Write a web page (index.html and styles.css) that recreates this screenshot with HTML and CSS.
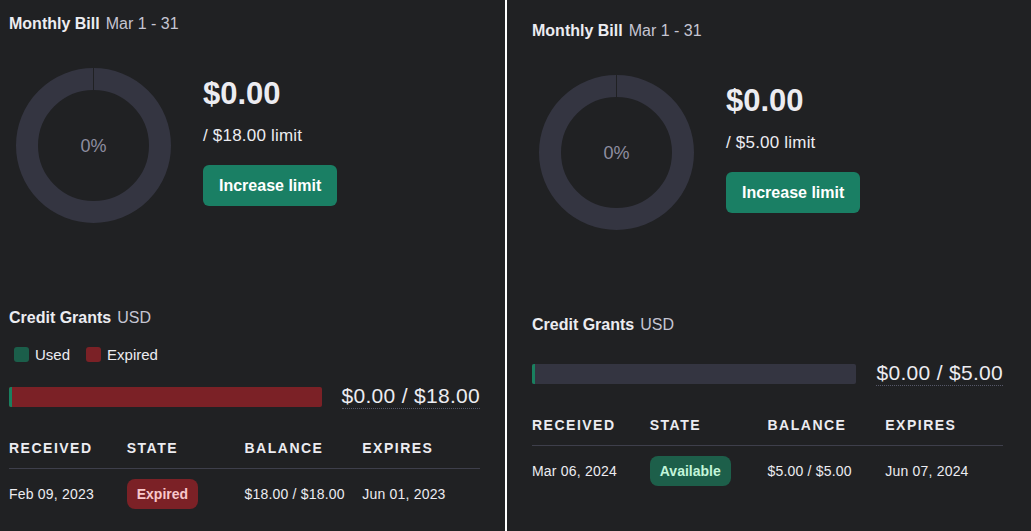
FILE: index.html
```html
<!DOCTYPE html>
<html lang="en">
<head>
<meta charset="utf-8">
<title>Billing</title>
<link rel="stylesheet" href="styles.css">
</head>
<body>
<div class="page">
  <section class="panel panel-left">
    <div class="heading"><span class="title">Monthly Bill</span><span class="sub">Mar 1 - 31</span></div>
    <div class="bill">
      <div class="donut">
        <svg width="155" height="155" viewBox="0 0 155 155">
          <circle cx="77.5" cy="77.5" r="66.5" fill="none" stroke="#343541" stroke-width="22"/>
          <line x1="77.5" y1="0" x2="77.5" y2="23" stroke="#202123" stroke-width="1"/>
        </svg>
        <span class="pct">0%</span>
      </div>
      <div class="amount">
        <div class="total">$0.00</div>
        <div class="limit">/ $18.00 limit</div>
        <button class="btn">Increase limit</button>
      </div>
    </div>
    <div class="heading grants-heading"><span class="title">Credit Grants</span><span class="sub">USD</span></div>
    <div class="legend">
      <span class="legend-item"><i class="sw sw-used"></i>Used</span>
      <span class="legend-item"><i class="sw sw-expired"></i>Expired</span>
    </div>
    <div class="bar-row">
      <div class="bar bar-expired"><span class="bar-used"></span></div>
      <span class="bar-label">$0.00 / $18.00</span>
    </div>
    <div class="table">
      <div class="th">Received</div><div class="th">State</div><div class="th">Balance</div><div class="th">Expires</div>
      <div class="td">Feb 09, 2023</div><div class="td"><span class="badge badge-expired">Expired</span></div><div class="td">$18.00 / $18.00</div><div class="td">Jun 01, 2023</div>
    </div>
  </section>
  <section class="panel panel-right">
    <div class="heading"><span class="title">Monthly Bill</span><span class="sub">Mar 1 - 31</span></div>
    <div class="bill">
      <div class="donut">
        <svg width="155" height="155" viewBox="0 0 155 155">
          <circle cx="77.5" cy="77.5" r="66.5" fill="none" stroke="#343541" stroke-width="22"/>
          <line x1="77.5" y1="0" x2="77.5" y2="23" stroke="#202123" stroke-width="1"/>
        </svg>
        <span class="pct">0%</span>
      </div>
      <div class="amount">
        <div class="total">$0.00</div>
        <div class="limit">/ $5.00 limit</div>
        <button class="btn">Increase limit</button>
      </div>
    </div>
    <div class="heading grants-heading"><span class="title">Credit Grants</span><span class="sub">USD</span></div>
    <div class="bar-row bar-row-solo">
      <div class="bar"><span class="bar-used"></span></div>
      <span class="bar-label">$0.00 / $5.00</span>
    </div>
    <div class="table">
      <div class="th">Received</div><div class="th">State</div><div class="th">Balance</div><div class="th">Expires</div>
      <div class="td">Mar 06, 2024</div><div class="td"><span class="badge badge-available">Available</span></div><div class="td">$5.00 / $5.00</div><div class="td">Jun 07, 2024</div>
    </div>
  </section>
</div>
</body>
</html>
```
FILE: styles.css
```css
* { box-sizing: border-box; }
html, body { margin: 0; padding: 0; }
body {
  background: #ffffff;
  font-family: "Liberation Sans", Arial, sans-serif;
  color: #ececf1;
  width: 1031px;
  height: 531px;
  overflow: hidden;
}
.page {
  display: flex;
  gap: 2px;
  height: 531px;
}
.panel {
  background: #202123;
  height: 531px;
}
.panel-left {
  width: 505px;
  padding: 12px 25px 0 9px;
}
.panel-right {
  flex: 1;
  padding: 19px 28px 0 25px;
}
.heading {
  font-size: 16px;
  line-height: 24px;
  display: flex;
  gap: 6px;
}
.title { font-weight: 700; color: #ececf1; }
.sub { color: #c5c5d2; }
.bill {
  display: flex;
  align-items: flex-start;
  margin-top: 32px;
  height: 155px;
}
.donut {
  position: relative;
  width: 155px;
  height: 155px;
  margin-left: 7px;
}
.donut svg { display: block; }
.pct {
  position: absolute;
  left: 0; right: 0; top: 0; bottom: 0;
  display: flex;
  align-items: center;
  justify-content: center;
  font-size: 18px;
  color: #8e8ea0;
  padding-top: 1px;
}
.amount {
  margin-left: 32px;
  padding-top: 8px;
  display: flex;
  flex-direction: column;
  align-items: flex-start;
}
.total {
  font-size: 31px;
  line-height: 36px;
  font-weight: 700;
}
.limit {
  margin-top: 12px;
  font-size: 17px;
  line-height: 24px;
  letter-spacing: 0.2px;
}
.btn {
  margin-top: 17px;
  height: 41px;
  padding: 0 16px;
  border: none;
  border-radius: 6px;
  background: #1a7f64;
  color: #ffffff;
  font-family: inherit;
  font-size: 16px;
  font-weight: 700;
}
.grants-heading { margin-top: 83px; }
.legend {
  display: flex;
  align-items: center;
  gap: 16px;
  height: 20px;
  margin-top: 14px;
  padding-left: 5px;
  font-size: 15px;
}
.legend-item {
  display: flex;
  align-items: center;
  gap: 6px;
  color: #ececf1;
}
.sw {
  display: block;
  width: 15px;
  height: 15px;
  border-radius: 3px;
}
.sw-used { background: #1b5e4a; }
.sw-expired { background: #7b2126; }
.bar-row {
  display: flex;
  align-items: center;
  gap: 20px;
  margin-top: 20px;
}
.bar-row-solo { margin-top: 24px; }
.bar {
  flex: 1;
  height: 20px;
  border-radius: 2px;
  background: #343541;
  display: flex;
  overflow: hidden;
}
.bar-expired { background: #7b2126; }
.bar-used {
  width: 3px;
  background: #19805f;
}
.bar-label {
  font-size: 21px;
  line-height: 24px;
  letter-spacing: 0.3px;
  border-bottom: 1px dotted #565869;
}
.table {
  display: grid;
  grid-template-columns: repeat(4, 1fr);
  margin-top: 29px;
}
.th {
  font-size: 14px;
  line-height: 20px;
  font-weight: 700;
  text-transform: uppercase;
  letter-spacing: 1.5px;
  padding-bottom: 10px;
  border-bottom: 1px solid #3e3f4b;
}
.td {
  font-size: 14px;
  line-height: 30px;
  letter-spacing: 0.2px;
  padding: 10px 0;
  display: flex;
  align-items: center;
}
.badge {
  display: inline-block;
  height: 30px;
  line-height: 30px;
  padding: 0 10px;
  border-radius: 8px;
  font-weight: 700;
  font-size: 14px;
  letter-spacing: 0;
}
.badge-expired { background: #7b2126; color: #f9c7cb; }
.badge-available { background: #1d5f4a; color: #c2f5d9; }
```
